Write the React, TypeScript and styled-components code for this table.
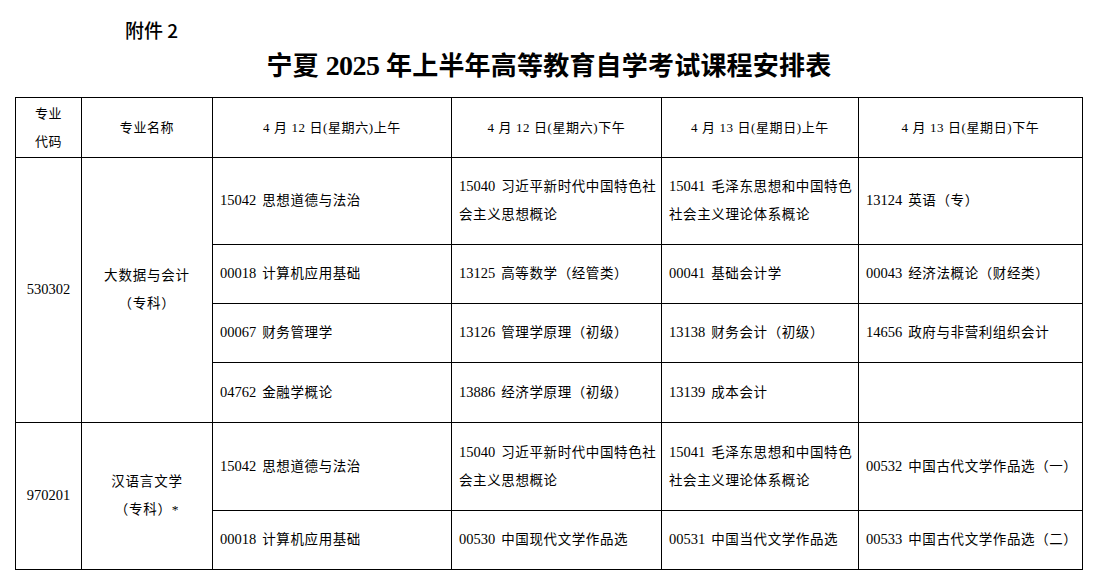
import React from "react";
import styled, { createGlobalStyle } from "styled-components";

const GlobalStyle = createGlobalStyle`
  html, body {
    margin: 0;
    padding: 0;
    background: #fff;
  }
  body {
    font-family: "Liberation Serif", "Noto Sans CJK SC", serif;
    color: #000;
  }
`;

interface Course {
  code: string;
  lines: string[];
}

interface Group {
  code: string;
  name: string[];
  rows: (Course | null)[][];
}

const headers = [
  "4 月 12 日(星期六)上午",
  "4 月 12 日(星期六)下午",
  "4 月 13 日(星期日)上午",
  "4 月 13 日(星期日)下午"
];

const c = (code: string, ...lines: string[]): Course => ({ code, lines });

const groups: Group[] = [
  {
    code: "530302",
    name: ["大数据与会计", "（专科）"],
    rows: [
      [
        c("15042", "思想道德与法治"),
        c("15040", "习近平新时代中国特色社", "会主义思想概论"),
        c("15041", "毛泽东思想和中国特色", "社会主义理论体系概论"),
        c("13124", "英语（专）")
      ],
      [
        c("00018", "计算机应用基础"),
        c("13125", "高等数学（经管类）"),
        c("00041", "基础会计学"),
        c("00043", "经济法概论（财经类）")
      ],
      [
        c("00067", "财务管理学"),
        c("13126", "管理学原理（初级）"),
        c("13138", "财务会计（初级）"),
        c("14656", "政府与非营利组织会计")
      ],
      [
        c("04762", "金融学概论"),
        c("13886", "经济学原理（初级）"),
        c("13139", "成本会计"),
        null
      ]
    ]
  },
  {
    code: "970201",
    name: ["汉语言文学", "（专科）*"],
    rows: [
      [
        c("15042", "思想道德与法治"),
        c("15040", "习近平新时代中国特色社", "会主义思想概论"),
        c("15041", "毛泽东思想和中国特色", "社会主义理论体系概论"),
        c("00532", "中国古代文学作品选（一）")
      ],
      [
        c("00018", "计算机应用基础"),
        c("00530", "中国现代文学作品选"),
        c("00531", "中国当代文学作品选"),
        c("00533", "中国古代文学作品选（二）")
      ]
    ]
  }
];

// row heights in px, taken from the printed sheet
const rowHeights = [87, 59, 59, 60, 88, 59];
const colWidths = [66, 131, 239, 210, 197, 224];

/**
 * Exam schedule sheet
 */
export default function App() {
  let rowIndex = 0;

  return (
    <Page>
      <GlobalStyle />
      <Attachment>附件 2</Attachment>
      <Title>
        宁夏 <TitleNum>2025</TitleNum> 年上半年高等教育自学考试课程安排表
      </Title>
      <Sheet>
        <colgroup>
          {colWidths.map((w, i) => (
            <col key={i} style={{ width: w }} />
          ))}
        </colgroup>
        <thead>
          <tr>
            <HeadCell>
              专业
              <br />
              代码
            </HeadCell>
            <HeadCell>专业名称</HeadCell>
            {headers.map(h => (
              <HeadCell key={h}>{h}</HeadCell>
            ))}
          </tr>
        </thead>
        <tbody>
          {groups.map(g =>
            g.rows.map((row, ri) => {
              const height = rowHeights[rowIndex++];
              return (
                <tr key={g.code + ri} style={{ height }}>
                  {ri === 0 && (
                    <>
                      <MajorCell rowSpan={g.rows.length}>
                        <Code>{g.code}</Code>
                      </MajorCell>
                      <MajorCell rowSpan={g.rows.length}>
                        {g.name.map((n, i) => (
                          <NameLine key={i}>{n}</NameLine>
                        ))}
                      </MajorCell>
                    </>
                  )}
                  {row.map((course, ci) => (
                    <CourseCell key={ci}>
                      {course &&
                        course.lines.map((line, li) => (
                          <CourseLine key={li}>
                            {li === 0 && <Code $gap>{course.code}</Code>}
                            {line}
                          </CourseLine>
                        ))}
                    </CourseCell>
                  ))}
                </tr>
              );
            })
          )}
        </tbody>
      </Sheet>
    </Page>
  );
}

const Page = styled.div`
  width: 1098px;
  height: 585px;
  overflow: hidden;
  padding-top: 18px;
  box-sizing: border-box;
`;

const Attachment = styled.div`
  padding-left: 125px;
  font-family: "Noto Sans CJK SC", "Liberation Sans", sans-serif;
  font-size: 19px;
  line-height: 24px;
  font-weight: 500;
`;

const Title = styled.h1`
  margin: 8px 0 0;
  height: 34px;
  overflow: visible;
  text-align: center;
  font-size: 26px;
  line-height: 34px;
  font-weight: 700;
  letter-spacing: 0.2px;
`;

const TitleNum = styled.span`
  font-size: 28px;
  line-height: 1;
  letter-spacing: -0.6px;
`;

const Sheet = styled.table`
  margin: 13px 0 0 15px;
  width: 1067px;
  table-layout: fixed;
  border-collapse: collapse;
  border: 1.5px solid #333;
`;

const HeadCell = styled.th`
  height: 59px;
  padding: 0;
  border: 1px solid #000;
  font-size: 13px;
  font-weight: 400;
  line-height: 28px;
  letter-spacing: 0.6px;
  text-align: center;
  vertical-align: middle;
`;

const MajorCell = styled.td`
  padding: 0;
  border: 1px solid #000;
  font-size: 13.5px;
  line-height: 28px;
  letter-spacing: 0.8px;
  text-align: center;
  vertical-align: middle;
`;

const NameLine = styled.div``;

const CourseCell = styled.td`
  padding: 0 4px 0 7px;
  border: 1px solid #000;
  font-size: 13.5px;
  line-height: 28px;
  letter-spacing: 0.6px;
  text-align: left;
  vertical-align: middle;
  white-space: nowrap;
`;

const CourseLine = styled.div`
  height: 28px;
`;

const Code = styled.span<{ $gap?: boolean }>`
  margin-right: ${p => (p.$gap ? "6px" : "0")};
  font-size: 14.5px;
  line-height: 1;
  letter-spacing: 0;
`;
